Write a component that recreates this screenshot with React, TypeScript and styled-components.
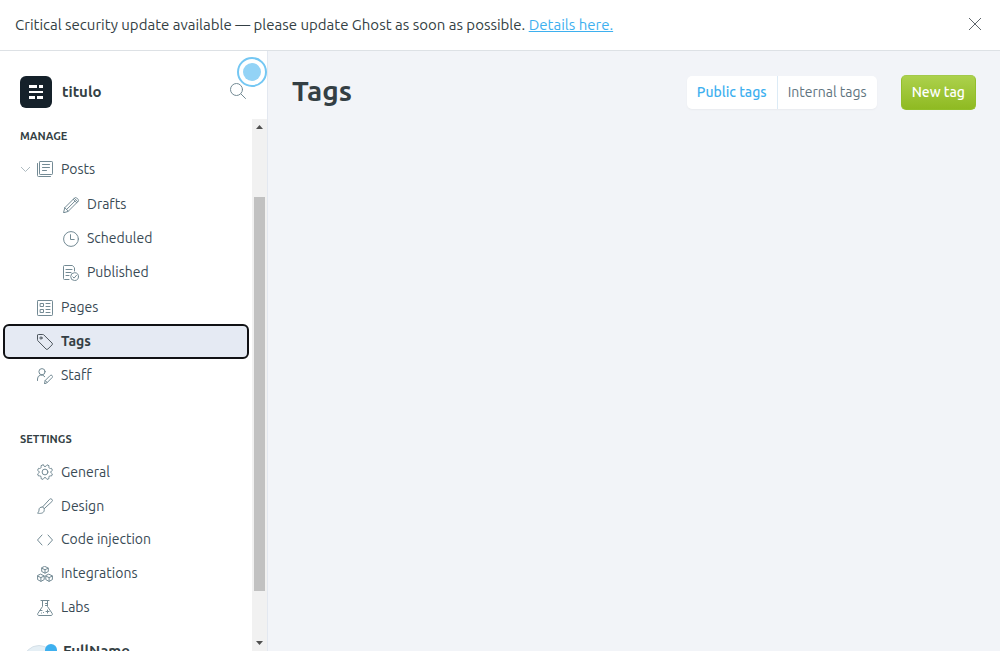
import React from "react";
import styled, { createGlobalStyle } from "styled-components";

const GlobalStyle = createGlobalStyle`
  *, *::before, *::after { box-sizing: border-box; }
  body {
    margin: 0;
    background: #f2f4f8;
    color: #394047;
    font-family: Ubuntu, "Noto Sans", "Open Sans", sans-serif;
    font-size: 15px;
    line-height: 20px;
  }
  a { color: inherit; text-decoration: none; }
  button { font: inherit; border: 0; background: none; padding: 0; cursor: pointer; }
  svg { display: block; flex: none; }
`;

const Page = styled.div`
  display: flex;
  flex-direction: column;
  height: 100vh;
  overflow: hidden;
`;

const Banner = styled.aside`
  display: flex;
  flex: none;
  align-items: center;
  justify-content: space-between;
  padding: 15px 18px 15px 15px;
  background: #fff;
  border-bottom: 1px solid #dde1e5;
`;

const BannerText = styled.p`
  margin: 0;
  color: #343f44;
  a { color: #3eb0ef; text-decoration: underline; }
`;

const CloseButton = styled.button`
  padding-bottom: 2px;
  color: #5f666c;
`;

const Body = styled.div`
  display: flex;
  flex: 1;
  min-height: 0;
`;

const Sidebar = styled.nav`
  display: flex;
  flex-direction: column;
  flex: none;
  width: 268px;
  background: #fff;
  border-right: 1px solid #e3e8f0;
`;

const SidebarHeader = styled.header`
  position: relative;
  display: flex;
  flex: none;
  align-items: center;
  padding: 25px 21px 11px 20px;
`;

const SiteName = styled.strong`
  flex: 1;
  margin-left: 10px;
  color: #343f44;
`;

const SearchButton = styled.button`
  padding-bottom: 2px;
  color: #738a94;
`;

const Beacon = styled.button`
  position: absolute;
  top: 6px;
  right: 0;
  width: 30px;
  height: 30px;
  padding: 4px;
  border: 2px solid #74c7f3;
  border-radius: 50%;
  background: #fff;
  &::before {
    content: "";
    display: block;
    width: 18px;
    height: 18px;
    border-radius: 50%;
    background: #93d3f6;
    margin: 0 auto;
  }
`;

const Scroller = styled.div`
  display: flex;
  flex: 1;
  min-height: 0;
`;

const Menu = styled.div`
  flex: 1;
  min-width: 0;
  padding: 9px 4px 0;
  overflow: hidden;
`;

const GroupTitle = styled.h2<{ $spaced?: boolean }>`
  margin: ${(p) => (p.$spaced ? "39px" : "0")} 0 8px 16px;
  font-size: 11px;
  line-height: 16px;
  font-weight: 600;
  color: #343f44;
`;

const List = styled.ul<{ $height: number; $before?: number }>`
  display: grid;
  grid-auto-rows: 1fr;
  height: ${(p) => p.$height}px;
  margin: ${(p) => p.$before ?? 0}px 0 0;
  padding: 0;
  list-style: none;
`;

const Item = styled.li`
  display: flex;
  align-items: center;
`;

const ItemLink = styled.a<{ $level?: number; $active?: boolean }>`
  display: flex;
  flex: 1;
  align-items: center;
  gap: 8px;
  height: 33px;
  padding-left: ${(p) => (p.$level === 2 ? "59px" : "33px")};
  border-radius: 5px;
  font-size: 14px;
  color: ${(p) => (p.$active ? "#343f44" : "#394a55")};
  font-weight: ${(p) => (p.$active ? 700 : 400)};
  background: ${(p) => (p.$active ? "#e5eaf3" : "transparent")};
  outline: ${(p) => (p.$active ? "2px solid #101114" : "none")};
  outline-offset: -1px;
  svg {
    color: ${(p) => (p.$active ? "#4d565d" : "#738a94")};
    margin-top: 1px;
  }
`;

const ExpandRow = styled.div`
  display: flex;
  align-items: center;
  height: 33px;
  padding-left: 16px;
  ${ItemLink} { padding-left: 6px; }
`;

const Expander = styled.button`
  color: #aebbc1;
`;

const User = styled.button`
  display: flex;
  align-items: flex-start;
  gap: 8px;
  margin: 17px 0 0 19px;
  font-weight: 700;
  color: #343f44;
`;

const Avatar = styled.span`
  position: relative;
  width: 32px;
  height: 32px;
  margin-top: 4px;
  border-radius: 50%;
  background: #e5eff5;
  border: 1px solid #d5e0e8;
  &::after {
    content: "";
    position: absolute;
    top: -2px;
    right: -3px;
    width: 12px;
    height: 12px;
    border-radius: 50%;
    background: #3eb0ef;
  }
`;

const Scrollbar = styled.div`
  display: flex;
  flex-direction: column;
  flex: none;
  width: 15px;
  padding: 0 2px;
  background: #f1f1f1;
  color: #505050;
`;

const ScrollArrow = styled.svg`
  margin: 4px auto;
`;

const Track = styled.div`
  display: grid;
  grid-template-rows: 62fr 394fr 44fr;
  flex: 1;
`;

const Thumb = styled.div`
  grid-row: 2;
  background: #c1c1c1;
`;

const Main = styled.main`
  flex: 1;
  min-width: 0;
`;

const MainHeader = styled.header`
  display: flex;
  align-items: center;
  gap: 24px;
  padding: 24px;
`;

const Title = styled.h1`
  flex: 1;
  margin: 0;
  padding-bottom: 3px;
  font-size: 28px;
  line-height: 32px;
  font-weight: 700;
  color: #343f44;
`;

const Segments = styled.div`
  display: flex;
  border-radius: 5px;
  background: #fff;
  box-shadow: 0 1px 2px rgba(0, 0, 0, 0.04);
`;

const Segment = styled.button<{ $active?: boolean }>`
  padding: 0 10px;
  font-size: 14px;
  line-height: 33px;
  white-space: nowrap;
  font-weight: ${(p) => (p.$active ? 500 : 400)};
  color: ${(p) => (p.$active ? "#3eb0ef" : "#607480")};
  & + & { border-left: 1px solid #dcebf6; }
`;

const PrimaryButton = styled.button`
  padding: 0 10px;
  border: 1px solid #92bf2b;
  border-top-color: #a3ca4a;
  border-radius: 5px;
  background: linear-gradient(#acd14c, #8fba22);
  color: #fff;
  font-size: 14px;
  line-height: 33px;
  font-weight: 500;
  white-space: nowrap;
`;

const Icon = ({ children }: { children: React.ReactNode }) => (
  <svg
    width="16"
    height="16"
    viewBox="0 0 16 16"
    fill="none"
    stroke="currentColor"
    strokeLinecap="round"
    strokeLinejoin="round"
    aria-hidden="true"
  >
    {children}
  </svg>
);

const icons = {
  posts: (
    <Icon>
      <rect x="2.5" y=".5" width="13" height="13" rx=".7" />
      <path d="M.5 2.5v12a1 1 0 0 0 1 1h12M5.5 3.5h7M5.5 6.5h7M5.5 9.5h4" />
    </Icon>
  ),
  drafts: (
    <Icon>
      <path d="M.6 15.4l1.2-4.7L11.6.9a1.4 1.4 0 0 1 2 0l1.5 1.5a1.4 1.4 0 0 1 0 2L5.3 14.2zM1.8 10.7l3.5 3.5M10.2 2.3l3.5 3.5M11.3 1.2l3.5 3.5M3.6 12.5l8.4-8.4" />
    </Icon>
  ),
  scheduled: (
    <Icon>
      <circle cx="8" cy="8" r="7.4" />
      <path d="M7.5 3.7v4.8h3.7" />
    </Icon>
  ),
  published: (
    <Icon>
      <path d="M6 14.5H1.5a1 1 0 0 1-1-1v-12a1 1 0 0 1 1-1h7.8l2.2 2.2V6M3 4.5h6M3 7.5h5M3 10.5h3" />
      <circle cx="11.6" cy="11.6" r="3.9" />
      <path d="M9.8 11.8l1.3 1.3 2.4-2.8" />
    </Icon>
  ),
  pages: (
    <Icon>
      <rect x=".5" y=".5" width="15" height="15" rx=".7" />
      <path d="M3.5 3.5h3v3h-3zM3.5 9.5h3v3h-3zM9 3.5h4M9 6.5h4M9 9.5h4M9 12.5h4" />
    </Icon>
  ),
  tags: (
    <Icon>
      <path d="M.5 1.3v4.5c0 .4.1.7.4 1l8.2 8.3a1.2 1.2 0 0 0 1.7 0l4.3-4.3a1.2 1.2 0 0 0 0-1.7L6.8.9a1.4 1.4 0 0 0-1-.4H1.3a.8.8 0 0 0-.8.8z" />
      <circle cx="4" cy="4" r="1.1" />
    </Icon>
  ),
  staff: (
    <Icon>
      <circle cx="5" cy="3.7" r="3.1" />
      <path d="M.5 12.5V11a4 4 0 0 1 7.3-2.3M7.5 15.5l.7-3 5-5a1.3 1.3 0 0 1 1.8 0l.2.2a1.3 1.3 0 0 1 0 1.8l-5 5zM8.2 12.5l2 2" />
    </Icon>
  ),
  general: (
    <Icon>
      <circle cx="8" cy="8" r="2.9" />
      <path d="M6.6 1.5a1.45 1.45 0 0 0 2.8 0L10 .8l2 .9-.1 1a1.45 1.45 0 0 0 1.6 1.8l1-.2.9 2-.9.6a1.45 1.45 0 0 0 0 2.4l.9.7-.9 2-1-.1a1.45 1.45 0 0 0-1.6 1.7l.1 1-2 .8-.6-.8a1.45 1.45 0 0 0-2.8 0l-.6.8-2-.8.1-1a1.45 1.45 0 0 0-1.6-1.7l-1 .1-.9-2 .9-.7a1.45 1.45 0 0 0 0-2.4l-.9-.6.9-2 1 .2a1.45 1.45 0 0 0 1.6-1.8L4 1.7l2-.9z" />
    </Icon>
  ),
  design: (
    <Icon>
      <path d="M5.6 8.9l7-7.6a1.6 1.6 0 0 1 2.3 2.3L7.3 10.6M5.6 8.9l1.7 1.7M5.2 9.1c-2-.2-3.3 1-3.2 2.9 0 1.3-.6 2.4-1.5 3.2 2.2.5 6.5.4 6.7-2.9.1-.7 0-1.1-.1-1.5" />
    </Icon>
  ),
  code: (
    <Icon>
      <path d="M5 3L.5 8 5 13M11 3l4.5 5-4.5 5" />
    </Icon>
  ),
  integrations: (
    <Icon>
      <path d="M8 .5l3.3 1.6v3.4L8 7.2 4.7 5.500V2.100zM4.900 2.300L8 3.700l3.100-1.400M8 3.700v3.300M3.900 8.300l3.300 1.600v3.700l-3.300 1.800-3.300-1.800V9.900zM.8 10.100l3.100 1.500 3.100-1.500M3.900 11.600v3.600M12.100 8.300l3.300 1.600v3.700l-3.300 1.800-3.300-1.800V9.900zM9 10.100l3.100 1.500 3.100-1.500M12.100 11.600v3.600" />
    </Icon>
  ),
  labs: (
    <Icon>
      <path d="M4 .5h8M5.5.5v6L.8 13.5a1.3 1.3 0 0 0 1.1 2h12.200a1.300 1.300 0 0 0 1.100-2L10.500 6.500v-6M8.500 3.500h2M8.500 5.500h2M3 10.500h2M10.500 10v3M9 11.500h3M6.500 12.500v.1M4.500 13v.1" />
    </Icon>
  ),
};

type Entry = { label: string; icon: keyof typeof icons; active?: boolean };

const postViews: Entry[] = [
  { label: "Drafts", icon: "drafts" },
  { label: "Scheduled", icon: "scheduled" },
  { label: "Published", icon: "published" },
];
const manage: Entry[] = [
  { label: "Pages", icon: "pages" },
  { label: "Tags", icon: "tags", active: true },
  { label: "Staff", icon: "staff" },
];
const settings: Entry[] = [
  { label: "General", icon: "general" },
  { label: "Design", icon: "design" },
  { label: "Code injection", icon: "code" },
  { label: "Integrations", icon: "integrations" },
  { label: "Labs", icon: "labs" },
];

const Entries = ({ items, height, before, level }: { items: Entry[]; height: number; before?: number; level?: number }) => (
  <List $height={height} $before={before}>
    {items.map((item) => (
      <Item key={item.label}>
        <ItemLink href="#" $level={level} $active={item.active} aria-current={item.active ? "page" : undefined}>
          {icons[item.icon]}
          {item.label}
        </ItemLink>
      </Item>
    ))}
  </List>
);

export default function App() {
  return (
    <Page>
      <GlobalStyle />
      <Banner>
        <BannerText>
          Critical security update available — please update Ghost as soon as possible. <a href="#">Details here.</a>
        </BannerText>
        <CloseButton aria-label="Close">
          <svg width="14" height="14" viewBox="0 0 14 14" stroke="currentColor" aria-hidden="true">
            <path d="M1 1l12 12M13 1L1 13" />
          </svg>
        </CloseButton>
      </Banner>
      <Body>
        <Sidebar>
          <SidebarHeader>
            <svg width="32" height="32" viewBox="0 0 32 32" aria-hidden="true">
              <rect width="32" height="32" rx="6" fill="#15212a" />
              <path d="M9 9h8v3H9zM19 9h4v3h-4zM9 15h14v2H9zM9 20h6v3H9zM17 20h6v3h-6z" fill="#fff" />
            </svg>
            <SiteName>titulo</SiteName>
            <SearchButton aria-label="Search">
              <Icon>
                <circle cx="6.5" cy="6.5" r="6" />
                <path d="M11 11l4.5 4.5" />
              </Icon>
            </SearchButton>
            <Beacon aria-label="What's new" />
          </SidebarHeader>
          <Scroller>
            <Menu>
              <GroupTitle>MANAGE</GroupTitle>
              <ExpandRow>
                <Expander aria-label="Collapse posts">
                  <svg width="11" height="8" viewBox="0 0 11 8" fill="none" stroke="currentColor" aria-hidden="true">
                    <path d="M1 2l4.5 4.5L10 2" />
                  </svg>
                </Expander>
                <ItemLink href="#">
                  {icons.posts}
                  Posts
                </ItemLink>
              </ExpandRow>
              <Entries items={postViews} height={102} before={2} level={2} />
              <Entries items={manage} height={102} before={1} />
              <GroupTitle $spaced>SETTINGS</GroupTitle>
              <Entries items={settings} height={169} />
              <User>
                <Avatar />
                FullName
              </User>
            </Menu>
            <Scrollbar aria-hidden="true">
              <ScrollArrow width="7" height="8" viewBox="0 0 7 8">
                <path d="M0 6h7L3.5 2z" fill="currentColor" />
              </ScrollArrow>
              <Track>
                <Thumb />
              </Track>
              <ScrollArrow width="7" height="8" viewBox="0 0 7 8">
                <path d="M0 2h7L3.5 6z" fill="currentColor" />
              </ScrollArrow>
            </Scrollbar>
          </Scroller>
        </Sidebar>
        <Main>
          <MainHeader>
            <Title>Tags</Title>
            <Segments>
              <Segment $active aria-pressed="true">Public tags</Segment>
              <Segment aria-pressed="false">Internal tags</Segment>
            </Segments>
            <PrimaryButton>New tag</PrimaryButton>
          </MainHeader>
        </Main>
      </Body>
    </Page>
  );
}
